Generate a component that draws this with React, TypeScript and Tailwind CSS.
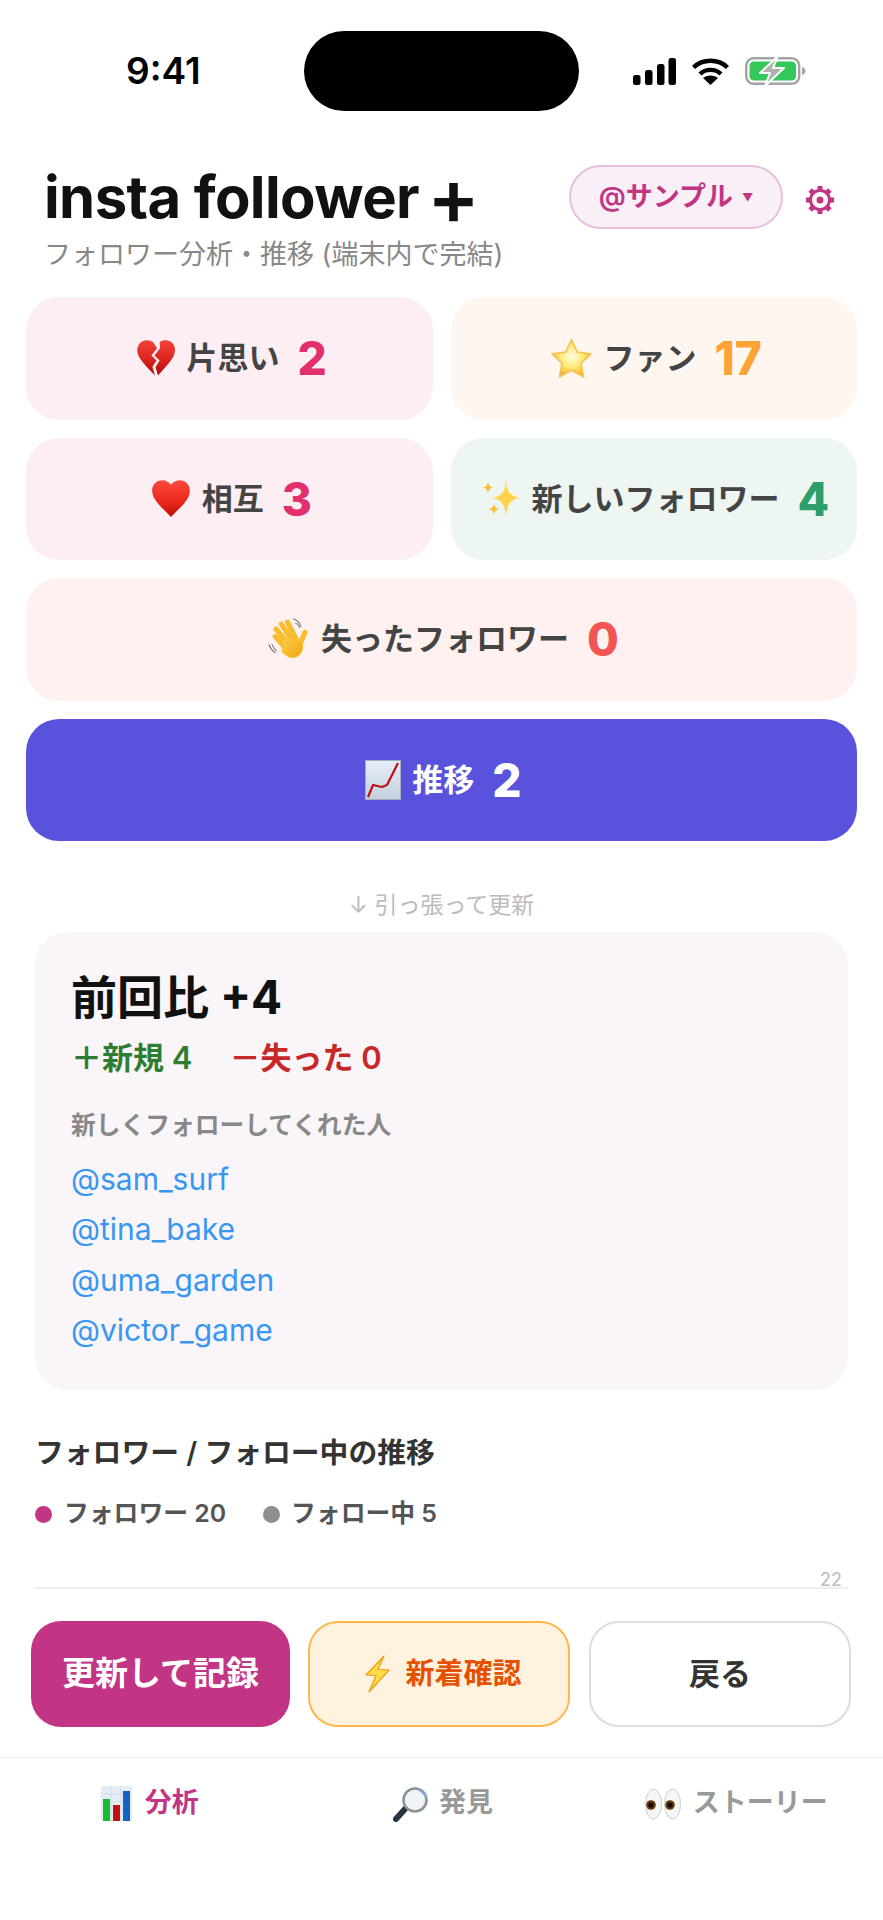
import type { ReactNode } from 'react'

const FONT = 'font-["Inter","Noto_Sans_CJK_JP",sans-serif]'

function BrokenHeart() {
  return (
    <svg width="40" height="38" viewBox="0 0 39 37" className="shrink-0" aria-hidden="true">
      <defs>
        <linearGradient id="bh" x1="0" y1="0" x2="0" y2="1">
          <stop offset="0" stopColor="#f4433a" />
          <stop offset="0.6" stopColor="#d9211b" />
          <stop offset="1" stopColor="#a80f08" />
        </linearGradient>
      </defs>
      <path d="M17 3.500C14 1 9.500 .5 6 2.500 1.500 5 .3 10.500 2 15c2 5.500 8 12 16.500 20.500L16 27l4-6-5-5 5.500-7z" fill="url(#bh)" />
      <path d="M23 3C26 .8 30 .5 33.500 2.500 38 5 39 10.500 37.200 15c-2 5.500-8 12-15.700 20.500L19 27.500l4-6.500-5-5 5.500-7z" fill="url(#bh)" />
    </svg>
  )
}

function Heart() {
  return (
    <svg width="40" height="39" viewBox="0 0 39 38" className="shrink-0" aria-hidden="true">
      <defs>
        <linearGradient id="hrt" x1="0" y1="0" x2="0" y2="1">
          <stop offset="0" stopColor="#fb4a3e" />
          <stop offset="0.65" stopColor="#e8231a" />
          <stop offset="1" stopColor="#b80f08" />
        </linearGradient>
      </defs>
      <path d="M19.500 37C14 31 6 24.500 2.500 17.500-.5 11 1.500 4.500 7 2c4.500-2 9.500-.5 12.500 3.500C22.500 1.500 27.500 0 32 2c5.500 2.500 7.500 9 4.500 15.500C33 24.500 25 31 19.500 37z" fill="url(#hrt)" />
    </svg>
  )
}

function Star() {
  return (
    <svg width="43" height="42" viewBox="0 0 42 39" className="shrink-0" aria-hidden="true">
      <defs>
        <radialGradient id="st" cx="0.5" cy="0.45" r="0.6">
          <stop offset="0" stopColor="#fffde0" />
          <stop offset="0.5" stopColor="#ffe873" />
          <stop offset="1" stopColor="#f3a10e" />
        </radialGradient>
      </defs>
      <path
        d="M21 1.500l5.800 12.300 13.200 1.700-9.700 9.200 2.500 13.300L21 31.500 9.200 38l2.500-13.300L2 15.500l13.200-1.700z"
        fill="url(#st)"
        stroke="#f7c35c"
        strokeWidth="1.600"
        strokeLinejoin="round"
      />
    </svg>
  )
}

function Sparkles() {
  return (
    <svg width="38" height="37" viewBox="0 0 38 37" className="shrink-0" aria-hidden="true">
      <path d="M24 1c1 10 3.500 15 13.500 17C27.500 20 25 25.500 24 36c-1-10.500-3.500-16-13.500-18C20.500 16 23 11 24 1z" fill="#fcd34a" stroke="#fbe6a6" strokeWidth=".6" />
      <path d="M6 1c.5 4 1.500 5.500 5 6.500C7.500 8.500 6.500 10 6 14c-.5-4-1.500-5.500-5-6.500C4.500 6.500 5.500 5 6 1z" fill="#fbbf3a" />
      <path d="M12 23c.5 3.500 1.500 5 5 6-3.500 1-4.500 2.500-5 6.500-.5-4-1.500-5.500-5-6.500 3.500-1 4.500-2.500 5-6z" fill="#fbbf3a" />
    </svg>
  )
}

function Wave() {
  return (
    <svg width="42" height="42" viewBox="0 0 41 41" className="shrink-0" aria-hidden="true">
      <defs>
        <linearGradient id="wv" x1="0" y1="0" x2="1" y2="1">
          <stop offset="0" stopColor="#fdd04a" />
          <stop offset="1" stopColor="#f0a20f" />
        </linearGradient>
      </defs>
      <g fill="url(#wv)" stroke="#f8bd2c" strokeLinecap="round">
        <path d="M8 11l11 13" strokeWidth="5" />
        <path d="M13 6l10 15" strokeWidth="5" />
        <path d="M19 4l8 16" strokeWidth="5" />
        <path d="M7 18l9 10" strokeWidth="5" />
        <path d="M36 14l-4 10" strokeWidth="5" />
        <path d="M14 21c4-2 12-3 18 1 3 5 2 12-3 15-5 3-11 1-15-4z" strokeWidth="1" />
      </g>
      <g fill="none" stroke="#6b6b6b" strokeWidth="1" strokeLinecap="round">
        <path d="M1 26c1 3 3 6 6 8" />
        <path d="M4 26c1 2 2 4 4 6" />
        <path d="M25 1c3 1 6 4 7 7" />
        <path d="M27 5c2 1 3 2 4 4" />
      </g>
    </svg>
  )
}

function ChartUp() {
  return (
    <svg width="36" height="40" viewBox="0 0 36 40" className="shrink-0" aria-hidden="true">
      <defs>
        <linearGradient id="cu" x1="0" y1="0" x2="0" y2="1">
          <stop offset="0" stopColor="#e6eff7" />
          <stop offset="1" stopColor="#c3d0dc" />
        </linearGradient>
      </defs>
      <rect x=".5" y=".5" width="35" height="39" fill="url(#cu)" stroke="#9fb0c6" />
      <path d="M3 37l5-12 9 2 5-2 11-22" fill="none" stroke="#c01010" strokeWidth="2.200" strokeLinejoin="round" />
    </svg>
  )
}

function ChartBars() {
  return (
    <svg width="31" height="35" viewBox="0 0 31 35" className="shrink-0" aria-hidden="true">
      <rect width="31" height="35" fill="#e4edf4" />
      <path d="M0 8h31M0 16h31M0 24h31M10 0v35M20 0v35" stroke="#d2dfe9" strokeWidth="1" />
      <rect x="2" y="13" width="7" height="22" fill="#12bf2c" />
      <rect x="12" y="19" width="7" height="16" fill="#c40f0f" />
      <rect x="22" y="5" width="7" height="30" fill="#1062c4" />
    </svg>
  )
}

function Magnifier() {
  return (
    <svg width="36" height="36" viewBox="0 0 36 36" className="shrink-0" aria-hidden="true">
      <path d="M12 23L3 33" stroke="#27343f" strokeWidth="6" strokeLinecap="round" />
      <circle cx="22" cy="14" r="11.500" fill="#f1f4f7" stroke="#8d9299" strokeWidth="2.600" />
      <path d="M27 4.500A11.500 11.500 0 0 1 33 12" fill="none" stroke="#7fa9dc" strokeWidth="2" />
    </svg>
  )
}

function Eyes() {
  return (
    <svg width="36" height="32" viewBox="0 0 36 32" className="shrink-0" aria-hidden="true">
      <ellipse cx="8.500" cy="16" rx="8" ry="15" fill="#f5f5f5" stroke="#cfcfcf" />
      <ellipse cx="27.500" cy="16" rx="8" ry="15" fill="#f5f5f5" stroke="#cfcfcf" />
      <circle cx="6" cy="17" r="4.800" fill="#6b3a0c" />
      <circle cx="25" cy="17" r="4.800" fill="#6b3a0c" />
      <circle cx="6" cy="17" r="2.600" fill="#120a04" />
      <circle cx="25" cy="17" r="2.600" fill="#120a04" />
    </svg>
  )
}

function Bolt() {
  return (
    <svg width="27" height="38" viewBox="0 0 27 38" className="shrink-0" aria-hidden="true">
      <path d="M20 1L2 20l10 .5L5 37l20-22-11-.5z" fill="#ffdc4a" stroke="#f59a0b" strokeWidth="1.200" strokeLinejoin="round" />
    </svg>
  )
}

function Gear() {
  return (
    <svg width="30" height="30" viewBox="0 0 30 30" className="shrink-0" aria-hidden="true">
      <g stroke="#c13584" strokeWidth="5" strokeLinecap="butt">
        <path d="M15 1v5" />
        <path d="M15 24v5" />
        <path d="M1 15h5" />
        <path d="M24 15h5" />
        <path d="M5.100 5.100l3.500 3.500" />
        <path d="M21.400 21.400l3.500 3.500" />
        <path d="M5.100 24.900l3.500-3.500" />
        <path d="M21.400 8.600l3.500-3.500" />
      </g>
      <circle cx="15" cy="15" r="9.500" fill="#fff" stroke="#c13584" strokeWidth="3" />
      <circle cx="15" cy="15" r="3.500" fill="#c13584" />
    </svg>
  )
}

function StatusIcons() {
  return (
    <div className="ml-[54px] flex items-center">
      <svg width="43" height="27" viewBox="0 0 43 27" aria-hidden="true">
        <rect x="0" y="17" width="7.500" height="10" rx="2.500" />
        <rect x="12" y="12" width="7.500" height="15" rx="2.500" />
        <rect x="24" y="6" width="7.500" height="21" rx="2.500" />
        <rect x="35.500" y="0" width="7.500" height="27" rx="2.500" />
      </svg>
      <svg width="37" height="27" viewBox="0 0 37 27" className="ml-[16px]" aria-hidden="true">
        <path d="M1.500 9.500C10.500 .5 26.500 .5 35.500 9.500" fill="none" stroke="#000" strokeWidth="4.400" />
        <path d="M8 16c5.500-5.500 15.500-5.500 21 0" fill="none" stroke="#000" strokeWidth="4.400" />
        <path d="M18.500 27l-7.500-7c4-3.500 11-3.500 15 0z" fill="#000" />
      </svg>
      <svg width="61" height="30" viewBox="0 0 61 30" className="ml-[16px]" aria-hidden="true">
        <rect x="1.200" y="2.200" width="53" height="25.600" rx="7.500" fill="none" stroke="#a3a3a3" strokeWidth="2.400" />
        <path d="M57 11c2.500 .8 3.500 2.300 3.500 4s-1 3.200-3.500 4z" fill="#a3a3a3" />
        <rect x="4.500" y="5.500" width="46.500" height="19" rx="4.500" fill="#34c759" />
        <path d="M33 0L15 17h10l-5 13 19-18H28z" fill="#b0b0b0" stroke="#fff" strokeWidth="2" strokeLinejoin="round" />
      </svg>
    </div>
  )
}

function StatButton({
  icon,
  label,
  count,
  bg,
  labelClass,
  countClass,
  wide,
}: {
  icon: ReactNode
  label: string
  count: number
  bg: string
  labelClass: string
  countClass: string
  wide?: boolean
}) {
  return (
    <div className={`flex h-[122.5px] items-start justify-center rounded-[33px] pt-[38px] pl-[4px] ${bg} ${wide ? 'col-span-2' : ''}`}>
      <div className="flex h-[46px] items-center">
        {icon}
        <span className={`ml-[11px] text-[31px] leading-[46px] font-semibold whitespace-nowrap ${labelClass}`}>{label}</span>
        <span className={`ml-[18px] text-[46px] leading-[46px] font-extrabold ${countClass}`}>{count}</span>
      </div>
    </div>
  )
}

export default function App() {
  return (
    <div className={`flex h-[1920px] w-[883px] flex-col overflow-hidden bg-white ${FONT}`}>
      {/* status bar */}
      <div className="flex items-center pt-[31px] pl-[126px]">
        <span className="w-[178px] text-[37px] leading-[44px] font-semibold text-black">9:41</span>
        <div className="h-[80px] w-[275px] rounded-[40px] bg-black" />
        <StatusIcons />
      </div>

      {/* header */}
      <div className="mt-[54px] flex items-start pr-[48px] pl-[44px]">
        <div className="flex-1">
          <h1 className="flex h-[64px] items-center text-[58px] leading-[64px] font-bold tracking-[-0.6px] whitespace-nowrap text-[#111]">
            insta follower
            <span className="ml-[8px] text-[78px] leading-[64px] font-semibold">+</span>
          </h1>
          <p className="mt-[8px] text-[27px] leading-[36px] text-[#888]">フォロワー分析・推移 (端末内で完結)</p>
        </div>
        <div className="flex h-[64px] w-[214px] items-center justify-center rounded-[32px] border-2 border-[#e8bedb] bg-[#f9eff7] text-[27px] font-semibold text-[#c13584]">
          @サンプル
          <span className="ml-[9px] text-[11px]">▼</span>
        </div>
        <div className="mt-[20px] ml-[22px] flex">
          <Gear />
        </div>
      </div>

      {/* stat buttons */}
      <div className="mt-[24px] grid grid-cols-2 gap-[18px] px-[26px]">
        <StatButton icon={<BrokenHeart />} label="片思い" count={2} bg="bg-[#fdeef4]" labelClass="text-[#444]" countClass="text-[#e1306c]" />
        <StatButton icon={<Star />} label="ファン" count={17} bg="bg-[#fff7ef]" labelClass="text-[#444]" countClass="text-[#fca335]" />
        <StatButton icon={<Heart />} label="相互" count={3} bg="bg-[#fdeef4]" labelClass="text-[#444]" countClass="text-[#e1306c]" />
        <StatButton icon={<Sparkles />} label="新しいフォロワー" count={4} bg="bg-[#eef6f2]" labelClass="text-[#444]" countClass="text-[#2e9e6b]" />
        <StatButton icon={<Wave />} label="失ったフォロワー" count={0} bg="bg-[#fef1f0]" labelClass="text-[#444]" countClass="text-[#f35555]" wide />
        <StatButton icon={<ChartUp />} label="推移" count={2} bg="bg-[#5852dc]" labelClass="text-white" countClass="text-white" wide />
      </div>

      <p className="mt-[49px] text-center text-[23px] leading-[30px] text-[#bbb]">↓ 引っ張って更新</p>

      {/* comparison card */}
      <div className="mx-[35px] mt-[12px] h-[458px] rounded-[33px] bg-[#f9f5f9] px-[36px] pt-[37px]">
        <h2 className="text-[46px] leading-[56px] font-bold text-[#111]">前回比 +4</h2>
        <div className="mt-[13px] flex gap-[37px] text-[31px] leading-[40px] font-semibold">
          <span className="text-[#2e7d32]">＋新規 4</span>
          <span className="text-[#c62828]">－失った 0</span>
        </div>
        <p className="mt-[31px] text-[24.75px] leading-[32px] font-semibold text-[#888]">新しくフォローしてくれた人</p>
        <ul className="mt-[12.5px] text-[30px] leading-[50.6px] text-[#3897f0]">
          <li>@sam_surf</li>
          <li>@tina_bake</li>
          <li>@uma_garden</li>
          <li>@victor_game</li>
        </ul>
      </div>

      {/* trend chart */}
      <div className="mx-[35px] mt-[43px]">
        <h3 className="text-[28.8px] leading-[40px] font-semibold text-[#333]">フォロワー / フォロー中の推移</h3>
        <div className="mt-[25px] flex h-[32px] items-center text-[24.8px] font-semibold text-[#555]">
          <span className="h-[17px] w-[17px] rounded-full bg-[#c13584]" />
          <span className="ml-[12px]">フォロワー 20</span>
          <span className="ml-[37px] h-[17px] w-[17px] rounded-full bg-[#8e8e93]" />
          <span className="ml-[11px]">フォロー中 5</span>
        </div>
        <div className="relative h-[59px] border-b-2 border-[#eee]">
          <span className="absolute right-[6px] bottom-[-4px] text-[18px] leading-[22px] text-[#bbb]">22</span>
        </div>
      </div>

      {/* actions */}
      <div className="mt-[32px] flex pl-[31px]">
        <div className="flex h-[106px] w-[259px] items-center justify-center rounded-[30px] bg-[#c13584] text-[33px] font-bold text-white">更新して記録</div>
        <div className="ml-[18px] flex h-[106px] w-[262px] items-center justify-center gap-[14px] rounded-[30px] border-2 border-[#ffb74d] bg-[#fff3e0] pl-[8px] text-[29px] font-bold text-[#e65100]">
          <Bolt />
          新着確認
        </div>
        <div className="ml-[19px] flex h-[106px] w-[262px] items-center justify-center rounded-[30px] border-2 border-[#ddd] bg-white text-[31px] font-semibold text-[#333]">戻る</div>
      </div>

      {/* tabs */}
      <div className="mt-[30px] flex h-[92px] border-t border-[#eee] text-[27px] font-semibold">
        <div className="flex flex-1 items-center justify-center gap-[13px] pl-[3px] text-[#c13584]">
          <ChartBars />
          分析
        </div>
        <div className="flex flex-1 items-center justify-center gap-[10px] text-[#999]">
          <Magnifier />
          発見
        </div>
        <div className="flex flex-1 items-center justify-center gap-[12px] text-[#999]">
          <Eyes />
          ストーリー
        </div>
      </div>
    </div>
  )
}
